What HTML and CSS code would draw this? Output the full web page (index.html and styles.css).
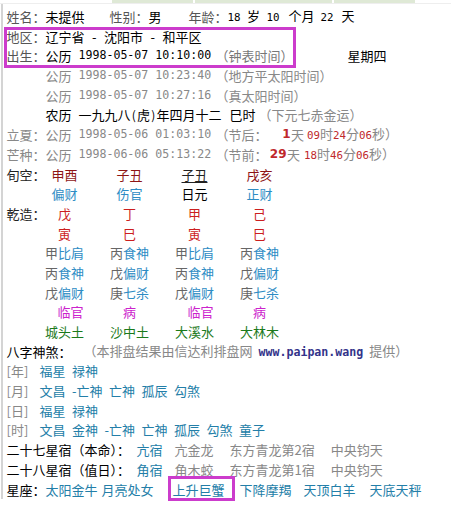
FILE: index.html
```html
<!DOCTYPE html>
<html lang="zh">
<head>
<meta charset="utf-8">
<title>八字排盘</title>
<link rel="stylesheet" href="styles.css">
</head>
<body>
<div class="page">
  <div class="tabs"><span class="tab tab-a"></span><span class="tab tab-b"></span><span class="tab tab-c"></span></div>
  <div class="panel">
    <div class="row">
      <span class="lab">姓名：</span><span class="val w-name">未提供</span>
      <span class="lab">性别：</span><span class="val w-sex">男</span>
      <span class="lab">年龄：</span><span class="val"><span class="n n-age1">18</span><span class="u u-sui">岁</span><span class="n n-age2">10</span><span class="u u-month">个月</span><span class="n n-age3">22</span><span class="u u-day">天</span></span>
    </div>
    <div class="row">
      <span class="lab">地区：</span><span class="val">辽宁省<span class="dash">-</span>沈阳市<span class="dash">-</span>和平区</span>
    </div>
    <div class="row">
      <span class="lab">出生：</span><span class="cal">公历</span><span class="date">1998-05-07 10:10:00</span><span class="note w-clock">（钟表时间）</span><span class="val">星期四</span>
    </div>
    <div class="row grey">
      <span class="lab"></span><span class="cal">公历</span><span class="date">1998-05-07 10:23:40</span><span class="note">（地方平太阳时间）</span>
    </div>
    <div class="row grey">
      <span class="lab"></span><span class="cal">公历</span><span class="date">1998-05-07 10:27:16</span><span class="note">（真太阳时间）</span>
    </div>
    <div class="row">
      <span class="lab"></span><span class="val lunar-l">农历</span><span class="val lunar">一九九八<span class="hp">(</span>虎<span class="hp">)</span>年四月十二</span><span class="val hour">巳时</span><span class="note">（下元七赤金运）</span>
    </div>
    <div class="row grey">
      <span class="lab">立夏：</span><span class="cal">公历</span><span class="date">1998-05-06 01:03:10</span><span class="note jie">（节后：</span><span class="days d-after">1</span><span class="u u-tian">天</span><span class="hms"><span class="rn">09</span>时<span class="rn">24</span>分<span class="rn">06</span>秒）</span>
    </div>
    <div class="row grey">
      <span class="lab">芒种：</span><span class="cal">公历</span><span class="date">1998-06-06 05:13:22</span><span class="note jie">（节前：</span><span class="days d-before">29</span><span class="u u-tian">天</span><span class="hms hms-b"><span class="rn">18</span>时<span class="rn">46</span>分<span class="rn">06</span>秒）</span>
    </div>

    <div class="pillars">
      <span class="plab">旬空：</span><span class="xk">申酉</span><span class="xk">子丑</span><span class="xk own">子丑</span><span class="xk">戌亥</span>
      <span class="plab"></span><span class="god">偏财</span><span class="god">伤官</span><span class="day">日元</span><span class="god">正财</span>
      <span class="plab">乾造：</span><span class="gz">戊</span><span class="gz">丁</span><span class="gz">甲</span><span class="gz">己</span>
      <span class="plab"></span><span class="gz">寅</span><span class="gz">巳</span><span class="gz">寅</span><span class="gz">巳</span>
      <span class="plab"></span><span>甲<b class="god">比肩</b></span><span>丙<b class="god">食神</b></span><span>甲<b class="god">比肩</b></span><span>丙<b class="god">食神</b></span>
      <span class="plab"></span><span>丙<b class="god">食神</b></span><span>戊<b class="god">偏财</b></span><span>丙<b class="god">食神</b></span><span>戊<b class="god">偏财</b></span>
      <span class="plab"></span><span>戊<b class="god">偏财</b></span><span>庚<b class="god">七杀</b></span><span>戊<b class="god">偏财</b></span><span>庚<b class="god">七杀</b></span>
      <span class="plab"></span><span class="stage shift">临官</span><span class="stage">病</span><span class="stage shift">临官</span><span class="stage">病</span>
      <span class="plab"></span><span class="nayin">城头土</span><span class="nayin">沙中土</span><span class="nayin">大溪水</span><span class="nayin">大林木</span>
    </div>

    <div class="row">
      <span class="blab">八字神煞：</span><span class="note credit">（本排盘结果由信达利排盘网<span class="url">www.paipan.wang</span>提供）</span>
    </div>
    <div class="row sha">
      <span class="br">[年]</span><span class="s">福星</span><span class="s">禄神</span>
    </div>
    <div class="row sha">
      <span class="br">[月]</span><span class="s">文昌</span><span class="s">-亡神</span><span class="s">亡神</span><span class="s">孤辰</span><span class="s">勾煞</span>
    </div>
    <div class="row sha">
      <span class="br">[日]</span><span class="s">福星</span><span class="s">禄神</span>
    </div>
    <div class="row sha">
      <span class="br">[时]</span><span class="s">文昌</span><span class="s">金神</span><span class="s">-亡神</span><span class="s">亡神</span><span class="s">孤辰</span><span class="s">勾煞</span><span class="s">童子</span>
    </div>
    <div class="row">
      <span class="blab xiu-l">二十七星宿（本命）：</span><span class="s xiu">亢宿</span><span class="note beast">亢金龙</span><span class="note quad">东方青龙第2宿</span><span class="note">中央钧天</span>
    </div>
    <div class="row">
      <span class="blab xiu-l">二十八星宿（值日）：</span><span class="s xiu">角宿</span><span class="note beast">角木蛟</span><span class="note quad">东方青龙第1宿</span><span class="note">中央钧天</span>
    </div>
    <div class="row">
      <span class="blab">星座：</span><span class="s z1">太阳金牛</span><span class="s z2">月亮处女</span><span class="s z3">上升巨蟹</span><span class="s z4">下降摩羯</span><span class="s z5">天顶白羊</span><span class="s">天底天秤</span>
    </div>
  </div>
  <div class="mark mark-birth"></div>
  <div class="mark mark-asc"></div>
</div>
</body>
</html>
```

FILE: styles.css
```css
html, body {
  margin: 0;
  padding: 0;
  background: #ffffff;
}

.page {
  position: relative;
  width: 451px;
  height: 506px;
  overflow: hidden;
  font-family: "Noto Sans CJK SC", "Noto Sans", sans-serif;
  font-size: 13px;
  color: #000;
}

.tabs {
  display: flex;
  height: 3px;
  padding-left: 112px;
  gap: 2px;
  border-bottom: 1px solid #eeeeee;
}
.tab { height: 3px; background: #dfe9d6; }
.tab-a { width: 81px; }
.tab-b { width: 137px; }
.tab-c { width: 81px; }

.panel {
  margin-left: 1px;
  border-left: 2px solid #d4d4d4;
  padding-top: 3px;
  padding-left: 3.5px;
}

.row {
  display: flex;
  height: 19.7px;
  line-height: 19.7px;
  white-space: nowrap;
  align-items: center;
}

.lab { width: 39px; color: #555; flex: none; }
.val { color: #000; flex: none; }
.w-name { width: 64px; }
.w-sex { width: 40px; }

.n { font-family: "DejaVu Sans Mono", monospace; font-size: 10.8px; }
.u { margin-left: 6.5px; }
.n-age2 { margin-left: 6.5px; }
.u-month { margin-left: 9px; }
.n-age3 { margin-left: 6px; }
.u-day { margin-left: 8px; }

.dash { display: inline-block; width: 19.5px; text-align: center; }

.cal { width: 33px; flex: none; }
.date {
  width: 137px;
  flex: none;
  font-family: "DejaVu Sans Mono", monospace;
  font-size: 11.6px;
}
.note { color: #888; flex: none; }
.w-clock { width: 132px; color: #777; }
.grey { color: #888; }
.grey .lab { color: #888; }

.lunar-l { width: 33px; }
.lunar { width: 143px; }
.hp { display: inline-block; width: 6.5px; text-align: center; font-size: 12px; }
.hour { width: 29px; margin-left: 8px; }

.jie { width: 52px; }
.days {
  flex: none;
  text-align: right;
  font-weight: bold;
  color: #c0282b;
  font-family: "DejaVu Sans", sans-serif;
  font-size: 12px;
}
.d-after { width: 23px; }
.d-before { width: 19px; }
.u-tian { margin-left: 0.5px; }
.hms { margin-left: 3px; }
.hms-b { margin-left: 4px; }
.rn { color: #c0282b; font-family: "DejaVu Sans Mono", monospace; font-size: 10.8px; }

.pillars {
  display: grid;
  grid-template-columns: 25.5px repeat(4, 65px);
  grid-auto-rows: 19.7px;
  line-height: 19.7px;
  text-align: center;
  white-space: nowrap;
  color: #666;
}
.plab { text-align: left; color: #222; }
.xk { color: #8e1515; }
.xk.own { color: #222; text-decoration: underline; text-underline-offset: 2px; }
.god { color: #2e8cc4; font-weight: normal; }
.day { color: #000; }
.gz { color: #cc1f1f; }
.stage { color: #cc22cc; }
.shift { padding-left: 12px; }
.nayin { color: #1b7a1b; }

.blab { color: #000; flex: none; }
.credit { margin-left: 12px; }
.url {
  font-family: "DejaVu Sans Mono", monospace;
  font-size: 11.6px;
  color: #33338a;
  font-weight: bold;
  margin: 0 6px 0 6px;
}
.sha .br { color: #888; width: 33px; flex: none; }
.s { color: #237ea8; margin-right: 6.5px; flex: none; }

.xiu-l { width: 130px; }
.xiu { margin-right: 12px; }
.beast { margin-right: 16px; }
.quad { margin-right: 16px; }

.z1 { margin-right: 4px; }
.z2 { margin-right: 19px; }
.z3 { margin-right: 15px; }
.z4 { margin-right: 12px; }
.z5 { margin-right: 14px; }

.mark {
  position: absolute;
  border: 3px solid #cc3ccc;
  box-sizing: border-box;
}
.mark-birth { left: 4px; top: 27px; width: 292px; height: 41px; }
.mark-asc { left: 168px; top: 476px; width: 67px; height: 25px; }
```
